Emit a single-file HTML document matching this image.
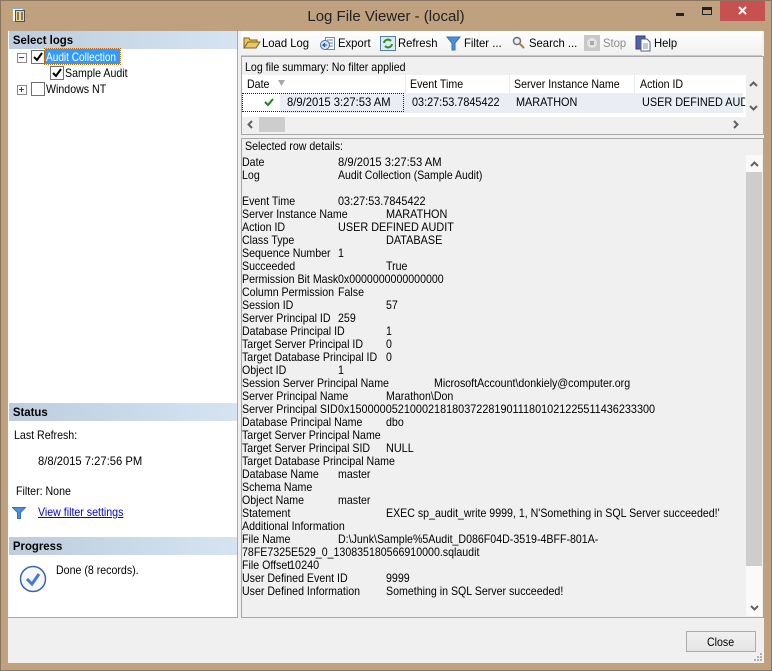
<!DOCTYPE html>
<html><head><meta charset="utf-8"><style>
html,body{margin:0;padding:0}
body{width:772px;height:671px;overflow:hidden;position:relative;background:#c0a17f;font:12px/13px "Liberation Sans",sans-serif;color:#000}
div,span,a,svg{position:absolute;white-space:pre}
.t{height:13px;transform:scaleX(.885);transform-origin:0 50%}
.u{transform:scaleX(.905)}
.n{transform:scaleX(.935)}
.b{transform:scaleX(.94)}
.h{left:9px;width:228px;height:18px;background:linear-gradient(90deg,#bdcddd,#d6e4f2);font-weight:bold;line-height:18px;text-indent:2px}
.h span{position:static;display:inline-block;transform:scaleX(.95);transform-origin:0 50%}
.c{width:12px;height:12px;border:1px solid #707070;background:#fff}
.d{left:242px}
.w{left:0;top:1px;width:0;height:0}
</style></head><body>
<div style="left:0;top:0;width:772px;height:1px;background:#8a7660"></div>
<div style="left:0;top:0;width:1px;height:671px;background:#8a7660"></div>
<div style="left:771px;top:0;width:1px;height:671px;background:#8a7660"></div>
<div style="left:0;top:670px;width:772px;height:1px;background:#8a7660"></div>
<div style="left:8px;top:31px;width:756px;height:632px;background:#f0f0f0"></div>
<svg style="left:10px;top:7px" width="16" height="17" viewBox="0 0 16 17"><rect x="2.500" y="1.500" width="11" height="13" fill="#f4f4f0" stroke="#9aa8b8"/><rect x="5.500" y="3.500" width="9" height="11" fill="#e8d9a0" stroke="#445060"/><rect x="7" y="5" width="2" height="8" fill="#8a7a50"/><rect x="11" y="5" width="2" height="8" fill="#8a7a50"/><path d="M1.500 4v9" stroke="#e8a820" stroke-width="2" stroke-dasharray="2 1"/></svg>
<div style="left:0;top:8px;width:772px;text-align:center;font-size:15px;line-height:17px;color:#222">Log File Viewer - (local)</div>
<div style="left:676px;top:13px;width:8px;height:3px;background:#222"></div>
<div style="left:702px;top:7px;width:8px;height:4px;border:1px solid #222;border-top:3px solid #222"></div>
<div style="left:720px;top:1px;width:45px;height:20px;background:#c75050"></div>
<svg style="left:737px;top:6px" width="11" height="10"><path d="M2 1l7 7M9 1l-7 7" stroke="#fff" stroke-width="2"/></svg>

<div style="left:8px;top:31px;width:229px;height:586px;background:#fff;border-right:1px solid #a8a8a8;border-bottom:1px solid #a8a8a8"></div>
<div class="h" style="top:31px"><span>Select logs</span></div>
<div style="left:17px;top:53px;width:8px;height:8px;border:1px solid #8a8a8a"></div><div style="left:19px;top:57px;width:5px;height:1px;background:#444"></div>
<div class="c" style="left:31px;top:50px"></div><svg style="left:32px;top:51px" width="12" height="12"><path d="M2 6l3 3 5-7" fill="none" stroke="#000" stroke-width="2"/></svg>
<div style="left:45px;top:49px;width:75px;height:15px;background:#3399ff;outline:1px dotted #c60"></div>
<div class="t" style="left:46px;top:51px;color:#fff;transform:scaleX(.84)">Audit Collection</div>
<div class="c" style="left:50px;top:66px"></div><svg style="left:51px;top:67px" width="12" height="12"><path d="M2 6l3 3 5-7" fill="none" stroke="#000" stroke-width="2"/></svg>
<div class="t" style="left:65px;top:67px">Sample Audit</div>
<div style="left:17px;top:85px;width:8px;height:8px;border:1px solid #8a8a8a"></div><div style="left:19px;top:89px;width:5px;height:1px;background:#444"></div><div style="left:21px;top:87px;width:1px;height:5px;background:#444"></div>
<div class="c" style="left:31px;top:82px"></div>
<div class="t" style="left:46px;top:83px">Windows NT</div>

<div class="h" style="top:403px"><span>Status</span></div>
<div class="t" style="left:14px;top:429px">Last Refresh:</div>
<div class="t n" style="left:38px;top:455px">8/8/2015 7:27:56 PM</div>
<div class="t" style="left:16px;top:485px">Filter: None</div>
<svg style="left:12px;top:507px" width="14" height="12"><path d="M.5.5h13L8.500 5.500V11.500h-3V5.500z" fill="#4a90d8" stroke="#3a70b0"/></svg>
<a class="t" style="left:38px;top:506px;color:#0000ee;text-decoration:underline">View filter settings</a>
<div class="h" style="top:537px"><span>Progress</span></div>
<svg style="left:19px;top:565px" width="28" height="28"><circle cx="14" cy="14" r="12.500" fill="#f4f6fa" stroke="#3a68a8" stroke-width="1.500"/><path d="M8 14l5 5 7-10" fill="none" stroke="#4a78d0" stroke-width="3"/></svg>
<div class="t" style="left:56px;top:564px">Done (8 records).</div>

<div style="left:241px;top:31px;width:521px;height:24px;background:linear-gradient(#fff,#f0f0f0);border-bottom:1px solid #c8c8c8"></div>
<svg style="left:243px;top:36px" width="18" height="14"><path d="M1 12V2h5l1 2h7v2H5L1 12h12l4-6H5" fill="#e8c860" stroke="#806020"/></svg>
<div class="t b" style="left:262px;top:37px">Load Log</div>
<svg style="left:319px;top:35px" width="17" height="16"><rect x="6.500" y="2.500" width="9" height="12" fill="#fff" stroke="#7088a8"/><path d="M8 5h6M8 8h6M8 11h6" stroke="#6080a0"/><circle cx="6" cy="10" r="4.500" fill="#d8e8f8" stroke="#4070b0"/><path d="M8 10H4l2-2M4 10l2 2" fill="none" stroke="#204090"/></svg>
<div class="t b" style="left:338px;top:37px">Export</div>
<div style="left:380px;top:36px;width:14px;height:13px;background:#e0eaf4;border:1px solid #5080b0"></div>
<svg style="left:381px;top:37px" width="14" height="13"><path d="M3 6a4 4 0 0 1 7-2M11 7a4 4 0 0 1-7 2" fill="none" stroke="#30902a" stroke-width="2"/></svg>
<div class="t b" style="left:398px;top:37px">Refresh</div>
<svg style="left:446px;top:36px" width="15" height="15"><path d="M1 1h13L9 7v7H6V7z" fill="#4a90d8" stroke="#3a70b0"/></svg>
<div class="t b" style="left:464px;top:37px">Filter ...</div>
<svg style="left:512px;top:36px" width="14" height="14"><circle cx="5" cy="5" r="3.500" fill="#e8f0f8" stroke="#707070" stroke-width="1.500"/><path d="M8 8l4 4" stroke="#b08030" stroke-width="2"/></svg>
<div class="t b" style="left:529px;top:37px">Search ...</div>
<div style="left:584px;top:35px;width:16px;height:16px;background:#c8c8c8"></div>
<div style="left:587px;top:38px;width:10px;height:10px;border-radius:5px;background:#e4e4e4"></div><div style="left:590px;top:41px;width:4px;height:4px;background:#aaa"></div>
<div class="t b" style="left:603px;top:37px;color:#8a8a8a">Stop</div>
<svg style="left:635px;top:35px" width="17" height="17"><rect x="1" y="1" width="9" height="13" fill="#5060b0" stroke="#303880"/><path d="M6 4h6l3 3v9H6z" fill="#fff" stroke="#506080"/><path d="M8 9h5M8 11h5M8 13h5" stroke="#8090a0"/></svg>
<div class="t b" style="left:654px;top:37px">Help</div>

<div style="left:241px;top:56px;width:521px;height:77px;background:#f0f0f0;border:1px solid #a8a8a8"></div>
<div class="t" style="left:245px;top:61px">Log file summary: No filter applied</div>
<div style="left:242px;top:75px;width:504px;height:42px;background:#fff"></div>
<div style="left:405px;top:75px;width:1px;height:18px;background:#e4eaf2"></div>
<div style="left:509px;top:75px;width:1px;height:18px;background:#e4eaf2"></div>
<div style="left:634px;top:75px;width:1px;height:18px;background:#e4eaf2"></div>
<div class="t" style="left:247px;top:78px">Date</div>
<svg style="left:277px;top:79px" width="9" height="8"><path d="M1 1h7L4.500 7z" fill="#a8a8a8"/></svg>
<div class="t" style="left:410px;top:78px">Event Time</div>
<div class="t" style="left:514px;top:78px">Server Instance Name</div>
<div class="t" style="left:640px;top:78px">Action ID</div>
<div style="left:280px;top:93px;width:463px;height:20px;background:#e8eef4"></div>
<div style="left:242px;top:93px;width:162px;height:19px;outline:1px dotted #222;outline-offset:-1px"></div>
<svg style="left:264px;top:98px" width="10" height="9"><path d="M1 4l3 3 5-6" fill="none" stroke="#208020" stroke-width="2"/></svg>
<div class="t n" style="left:287px;top:96px">8/9/2015 3:27:53 AM</div>
<div class="t u" style="left:412px;top:96px">03:27:53.7845422</div>
<div class="t u" style="left:516px;top:96px">MARATHON</div>
<div class="t u" style="left:642px;top:96px;width:114px;overflow:hidden">USER DEFINED AUDIT</div>
<svg style="left:749px;top:81px" width="9" height="6"><path d="M1 5l3.500-3.500L8 5" fill="none" stroke="#606060" stroke-width="2"/></svg>
<svg style="left:749px;top:105px" width="9" height="6"><path d="M1 1l3.500 3.500L8 1" fill="none" stroke="#606060" stroke-width="2"/></svg>
<svg style="left:247px;top:120px" width="6" height="9"><path d="M5 1L1.500 4.500 5 8" fill="none" stroke="#606060" stroke-width="2"/></svg>
<svg style="left:733px;top:120px" width="6" height="9"><path d="M1 1l3.500 3.500L1 8" fill="none" stroke="#606060" stroke-width="2"/></svg>
<div style="left:259px;top:117px;width:26px;height:15px;background:#cdcdcd"></div>

<div style="left:241px;top:138px;width:521px;height:478px;background:#f0f0f0;border:1px solid #a8a8a8"></div>
<div class="t" style="left:245px;top:140px">Selected row details:</div>
<div style="left:746px;top:155px;width:16px;height:461px;background:#fafafa"></div>
<svg style="left:750px;top:161px" width="9" height="6"><path d="M1 5l3.500-3.500L8 5" fill="none" stroke="#606060" stroke-width="2"/></svg>
<svg style="left:750px;top:605px" width="9" height="6"><path d="M1 1l3.500 3.500L8 1" fill="none" stroke="#606060" stroke-width="2"/></svg>
<div style="left:746px;top:172px;width:16px;height:394px;background:#cdcdcd"></div>

<div class="w">
<div class="t d" style="top:155px">Date</div><div class="t n" style="left:338px;top:155px">8/9/2015 3:27:53 AM</div>
<div class="t d" style="top:168px">Log</div><div class="t" style="left:338px;top:168px;transform:scaleX(.873)">Audit Collection (Sample Audit)</div>
<div class="t d" style="top:194px">Event Time</div><div class="t u" style="left:338px;top:194px">03:27:53.7845422</div>
<div class="t d" style="top:207px">Server Instance Name</div><div class="t u" style="left:386px;top:207px">MARATHON</div>
<div class="t d" style="top:220px">Action ID</div><div class="t u" style="left:338px;top:220px">USER DEFINED AUDIT</div>
<div class="t d" style="top:233px">Class Type</div><div class="t u" style="left:386px;top:233px">DATABASE</div>
<div class="t d" style="top:246px">Sequence Number</div><div class="t" style="left:338px;top:246px">1</div>
<div class="t d" style="top:259px">Succeeded</div><div class="t" style="left:386px;top:259px">True</div>
<div class="t d" style="top:272px">Permission Bit Mask</div><div class="t" style="left:338px;top:272px">0x0000000000000000</div>
<div class="t d" style="top:285px">Column Permission</div><div class="t" style="left:338px;top:285px">False</div>
<div class="t d" style="top:298px">Session ID</div><div class="t" style="left:386px;top:298px">57</div>
<div class="t d" style="top:311px">Server Principal ID</div><div class="t" style="left:338px;top:311px">259</div>
<div class="t d" style="top:324px">Database Principal ID</div><div class="t" style="left:386px;top:324px">1</div>
<div class="t d" style="top:337px">Target Server Principal ID</div><div class="t" style="left:386px;top:337px">0</div>
<div class="t d" style="top:350px">Target Database Principal ID</div><div class="t" style="left:386px;top:350px">0</div>
<div class="t d" style="top:363px">Object ID</div><div class="t" style="left:338px;top:363px">1</div>
<div class="t d" style="top:376px">Session Server Principal Name</div><div class="t" style="left:434px;top:376px">MicrosoftAccount\donkiely@computer.org</div>
<div class="t d" style="top:389px">Server Principal Name</div><div class="t" style="left:386px;top:389px">Marathon\Don</div>
<div class="t d" style="top:402px">Server Principal SID</div><div class="t u" style="left:338px;top:402px">0x150000052100021818037228190111801021225511436233300</div>
<div class="t d" style="top:415px">Database Principal Name</div><div class="t" style="left:386px;top:415px">dbo</div>
<div class="t d" style="top:428px">Target Server Principal Name</div>
<div class="t d" style="top:441px">Target Server Principal SID</div><div class="t u" style="left:386px;top:441px">NULL</div>
<div class="t d" style="top:454px">Target Database Principal Name</div>
<div class="t d" style="top:467px">Database Name</div><div class="t" style="left:338px;top:467px">master</div>
<div class="t d" style="top:480px">Schema Name</div>
<div class="t d" style="top:493px">Object Name</div><div class="t" style="left:338px;top:493px">master</div>
<div class="t d" style="top:506px">Statement</div><div class="t" style="left:386px;top:506px">EXEC sp_audit_write 9999, 1, N'Something in SQL Server succeeded!'</div>
<div class="t d" style="top:519px">Additional Information</div>
<div class="t d" style="top:532px">File Name</div><div class="t" style="left:338px;top:532px">D:\Junk\Sample%5Audit_D086F04D-3519-4BFF-801A-</div>
<div class="t d" style="top:545px">78FE7325E529_0_130835180566910000.sqlaudit</div>
<div class="t d" style="top:558px">File Offset</div><div class="t u" style="left:289px;top:558px">10240</div>
<div class="t d" style="top:571px">User Defined Event ID</div><div class="t" style="left:386px;top:571px">9999</div>
<div class="t d" style="top:584px">User Defined Information</div><div class="t" style="left:386px;top:584px">Something in SQL Server succeeded!</div>
</div>

<div style="left:686px;top:631px;width:68px;height:19px;border:1px solid #acacac;background:linear-gradient(#f0f0f0,#e5e5e5)"></div>
<div class="t" style="left:707px;top:636px">Close</div>
<svg style="left:753px;top:652px" width="10" height="10" fill="#b0b0b0"><rect x="7" y="1" width="2" height="2"/><rect x="4" y="4" width="2" height="2"/><rect x="7" y="4" width="2" height="2"/><rect x="1" y="7" width="2" height="2"/><rect x="4" y="7" width="2" height="2"/><rect x="7" y="7" width="2" height="2"/></svg>
</body></html>
